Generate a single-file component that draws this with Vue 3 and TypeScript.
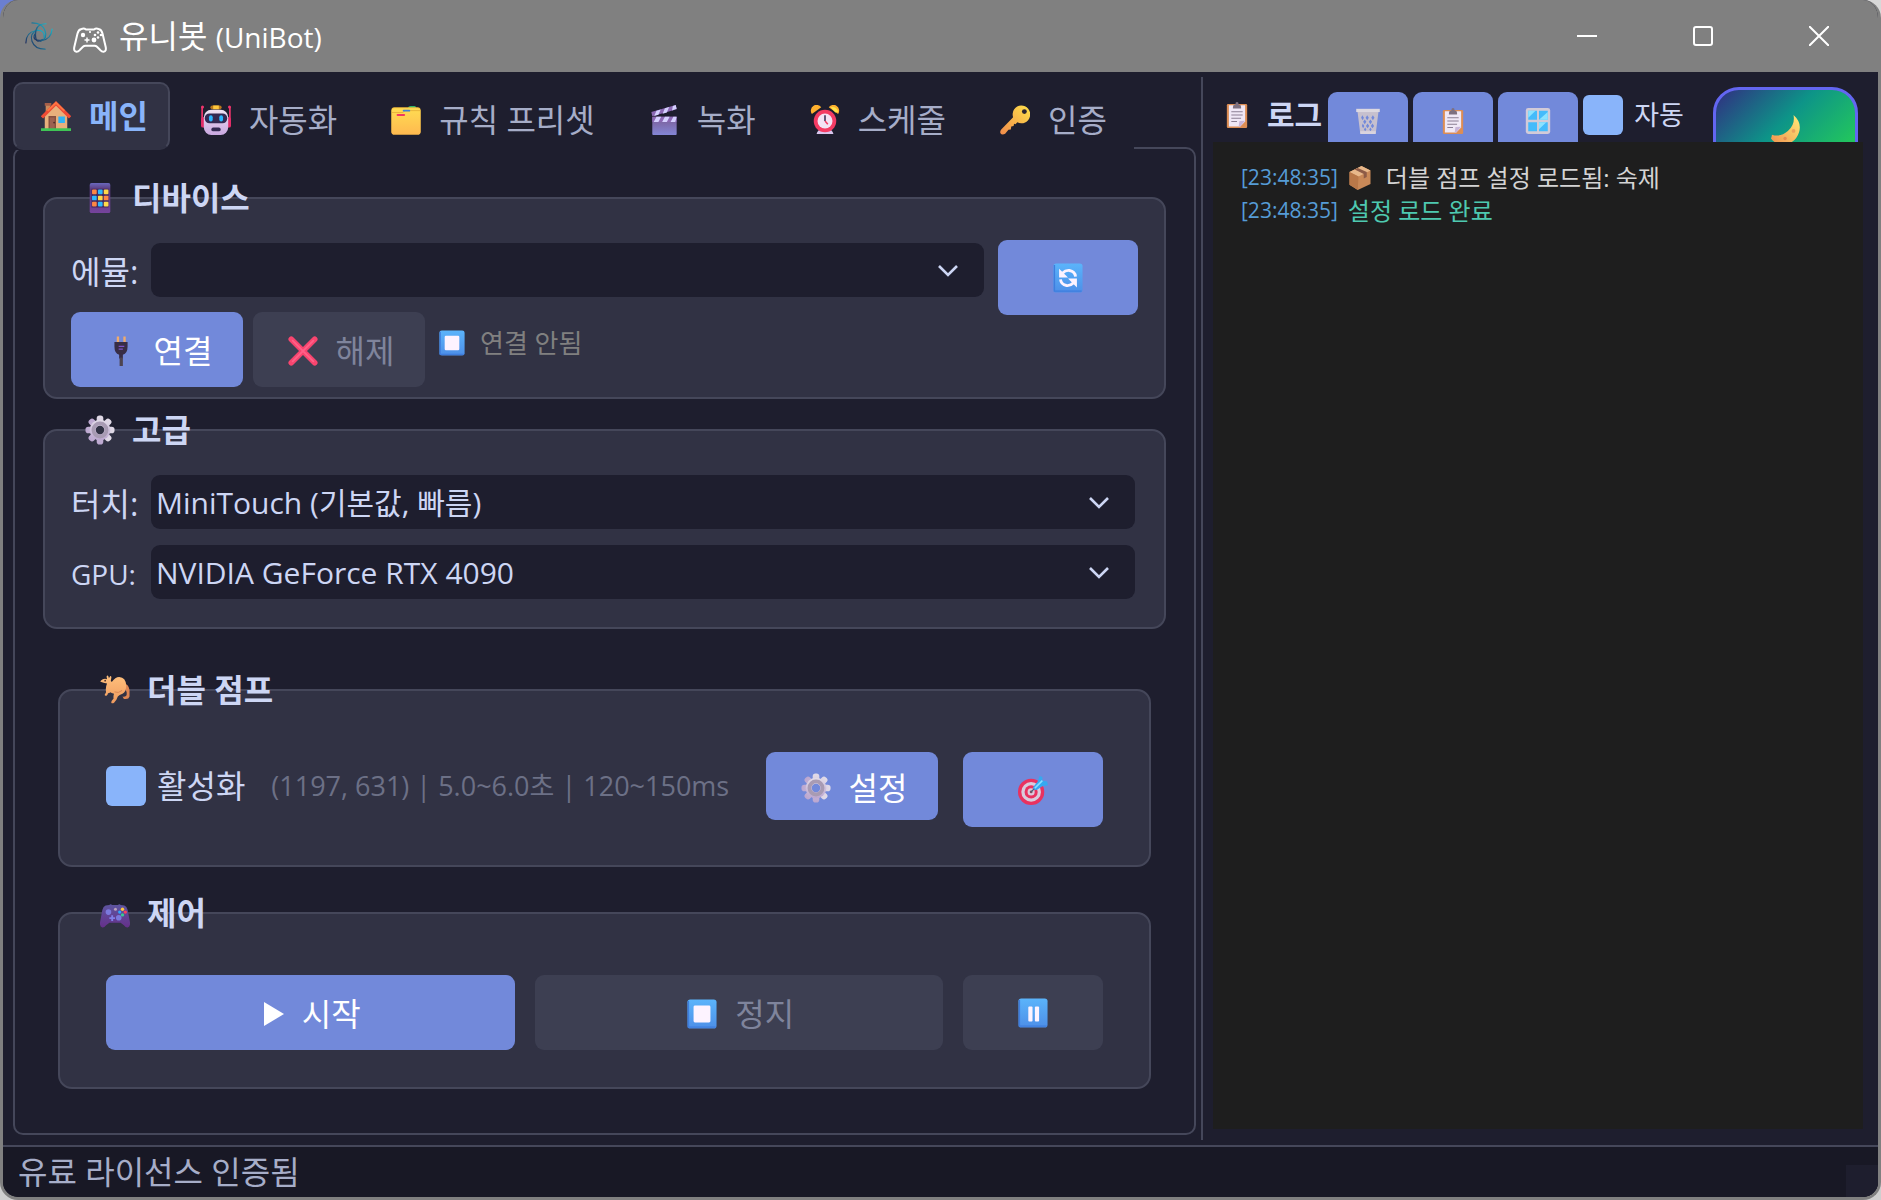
<script setup lang="ts">
import { ref } from 'vue'

interface Tab {
  id: string
  icon: string
  label: string
}

interface LogEntry {
  time: string
  icon?: string
  text: string
  kind: 'info' | 'success'
}

const tabs: Tab[] = [
  { id: 'main', icon: 'house', label: '메인' },
  { id: 'auto', icon: 'robot', label: '자동화' },
  { id: 'presets', icon: 'folder', label: '규칙 프리셋' },
  { id: 'record', icon: 'clapper', label: '녹화' },
  { id: 'schedule', icon: 'alarm', label: '스케줄' },
  { id: 'auth', icon: 'key', label: '인증' },
]

const logs: LogEntry[] = [
  { time: '[23:48:35]', icon: 'package', text: '더블 점프 설정 로드됨: 숙제', kind: 'info' },
  { time: '[23:48:35]', text: '설정 로드 완료', kind: 'success' },
]

const activeTab = ref('main')
const doubleJump = ref(true)
const autoScroll = ref(true)
</script>

<template>
  <svg class="defs" aria-hidden="true">
    <defs>
      <linearGradient id="g-blue" x1="0" y1="0" x2="0" y2="1">
        <stop offset="0" stop-color="#5bb4fb" /><stop offset="1" stop-color="#4d8fe8" />
      </linearGradient>
      <linearGradient id="g-folder" x1="0" y1="0" x2="0" y2="1">
        <stop offset="0" stop-color="#ffdc52" /><stop offset="1" stop-color="#ffb950" />
      </linearGradient>
      <linearGradient id="g-key" x1="1" y1="0" x2="0" y2="1">
        <stop offset="0" stop-color="#ffe14a" /><stop offset="1" stop-color="#f08a4b" />
      </linearGradient>
      <linearGradient id="g-robot" x1="0" y1="0" x2="0" y2="1">
        <stop offset="0" stop-color="#efe3f3" /><stop offset="1" stop-color="#c9a7e0" />
      </linearGradient>
      <linearGradient id="g-clap" x1="0" y1="0" x2="0" y2="1">
        <stop offset="0" stop-color="#7a5c93" /><stop offset="1" stop-color="#8486d6" />
      </linearGradient>
      <linearGradient id="g-phone" x1="0" y1="0" x2="0" y2="1">
        <stop offset="0" stop-color="#6a68bd" /><stop offset="0.2" stop-color="#5c3c7e" /><stop offset="1" stop-color="#75439c" />
      </linearGradient>
      <linearGradient id="g-gear" x1="0" y1="0" x2="0" y2="1">
        <stop offset="0" stop-color="#e2dce8" /><stop offset="1" stop-color="#bba6cf" />
      </linearGradient>
      <linearGradient id="g-pad" x1="0" y1="0" x2="0" y2="1">
        <stop offset="0" stop-color="#5d55a0" /><stop offset="1" stop-color="#65308a" />
      </linearGradient>
      <linearGradient id="g-moon" x1="1" y1="0" x2="0" y2="1">
        <stop offset="0" stop-color="#ffec78" /><stop offset="1" stop-color="#f0904e" />
      </linearGradient>
      <linearGradient id="g-swirl" x1="1" y1="0" x2="0" y2="1">
        <stop offset="0" stop-color="#1fb5c9" /><stop offset="1" stop-color="#22305f" />
      </linearGradient>
      <linearGradient id="g-roo" x1="0" y1="0" x2="0" y2="1">
        <stop offset="0" stop-color="#ffc07c" /><stop offset="1" stop-color="#ee9a5e" />
      </linearGradient>

      <symbol id="i-house" viewBox="0 0 32 32">
        <path d="M5 3h5v14H5z" fill="#c98a5c" />
        <path d="M4 2h7v3H4z" fill="#a65f49" />
        <path d="M4 16 16 4l12 12v14H4z" fill="#e8b07c" />
        <path d="M8 16h8v14H8z" fill="#87503f" />
        <path d="M9.500 17.500h5V30h-5z" fill="#9c6150" />
        <circle cx="14" cy="23" r="1" fill="#4b2b28" />
        <path d="M18.500 16.500h7v7h-7z" fill="#2fb3f5" />
        <path d="m1 17.500 15-15 15 15" fill="none" stroke="#f04b34" stroke-width="3.500" />
        <path d="m7 10.500 9-8.500 9 8.500" fill="none" stroke="#ff7442" stroke-width="2" />
        <path d="M0 29h32v3H0z" fill="#3fc455" />
      </symbol>

      <symbol id="i-robot" viewBox="0 0 32 32">
        <path d="M1.200 2v18M30.800 2v18" stroke="#f0356c" stroke-width="1.800" />
        <circle cx="1.600" cy="2" r="1.600" fill="#f0356c" /><circle cx="30.400" cy="2" r="1.600" fill="#f0356c" />
        <rect x="0" y="13" width="6" height="11" rx="2" fill="#e22d68" /><rect x="26" y="13" width="6" height="11" rx="2" fill="#e22d68" />
        <rect x="10" y="0.500" width="12" height="4" rx="2" fill="#b97619" /><rect x="13" y="0.500" width="6" height="4" fill="#ffc83d" />
        <rect x="3" y="5" width="26" height="27" rx="8" fill="url(#g-robot)" />
        <rect x="4" y="9" width="24" height="10.500" rx="5" fill="#332a52" />
        <rect x="8.500" y="11" width="4" height="6.500" rx="2" fill="#29b6ff" /><rect x="19.500" y="11" width="4" height="6.500" rx="2" fill="#29b6ff" />
        <rect x="11" y="24" width="10" height="4" rx="2" fill="#332a52" />
      </symbol>

      <symbol id="i-folder" viewBox="0 0 32 32">
        <path d="M18 4q0-3 3-3h4q2 0 2 3z" fill="#35b869" />
        <rect x="0.500" y="2.500" width="31" height="29" rx="3" fill="#f4bc3c" />
        <rect x="0.500" y="3.500" width="31" height="28" rx="3" fill="url(#g-folder)" />
        <path d="M1 8h12l2-2h16" fill="none" stroke="#e9b23a" stroke-width="1" />
        <rect x="12.500" y="5" width="8" height="2" rx="1" fill="#3d84d6" />
        <rect x="6" y="9.500" width="9" height="2.200" rx="1" fill="#f03861" />
      </symbol>

      <symbol id="i-clapper" viewBox="0 0 32 32">
        <path d="M2.500 7.500 28.500 0l1 4.500L3.500 12z" fill="#8c69b4" />
        <path d="m8 6 4.500-1.300-2.500 5.800-4.500 1.300zm9-2.600 4.500-1.300L19 8l-4.500 1.300zM25.500 1l3-1 1 4-5 1.800z" fill="#d5d0ff" />
        <rect x="3.500" y="12.500" width="26" height="19.500" rx="1" fill="url(#g-clap)" />
        <path d="M3.500 12.500h26V18h-26z" fill="#8c69b4" />
        <path d="M8 12.500h5L10 18H5zm9 0h5L19 18h-5zm9 0h3.500L28 18h-5z" fill="#d5d0ff" />
      </symbol>

      <symbol id="i-alarm" viewBox="0 0 32 32">
        <path d="M7 31q1-5 5-5h8q4 0 5 5z" fill="#d8c5ec" />
        <path d="M2 9.500A6 6 0 0 1 12 2.500zM30 9.500A6 6 0 0 0 20 2.500z" fill="#ffb02e" />
        <path d="M22 2.500a6 6 0 0 1 8 5l-3 .5z" fill="#ffe24a" />
        <circle cx="16" cy="17" r="12" fill="#f43b63" />
        <circle cx="16" cy="17" r="8" fill="#f3e3f5" />
        <path d="M16 11v6" stroke="#332a52" stroke-width="1.600" /><path d="m16 17 3 3.500" stroke="#f43b63" stroke-width="1.600" />
      </symbol>

      <symbol id="i-key" viewBox="0 0 32 32">
        <path d="M22.500 0.500a9.500 9.500 0 1 1-4 18l-2 2-1.500-.5-.5 2.500-2.500.500-.5 3-2.500.500-3.500 4.200Q2 32.500.5 30q-.8-2 .8-4L14 13A9.500 9.500 0 0 1 22.500.500z" fill="url(#g-key)" />
        <circle cx="26" cy="7" r="2.600" fill="#2b2430" />
      </symbol>

      <symbol id="i-phone" viewBox="0 0 32 32">
        <rect x="5" y="0" width="22" height="32" rx="2" fill="url(#g-phone)" />
        <path d="M7 6h18v20H7z" fill="#43285f" />
        <g fill="#ff8744"><rect x="7.500" y="7" width="5" height="5" rx="1" /><rect x="20" y="13.500" width="5" height="5" rx="1" /><rect x="7.500" y="20" width="5" height="5" rx="1" /></g>
        <g fill="#2eb9ff"><rect x="13.800" y="7" width="5" height="5" rx="1" /><rect x="7.500" y="13.500" width="5" height="5" rx="1" /><rect x="13.800" y="20" width="5" height="5" rx="1" /></g>
        <g fill="#ffd94a"><rect x="20" y="7" width="5" height="5" rx="1" /><rect x="13.800" y="13.500" width="5" height="5" rx="1" /><rect x="20" y="20" width="5" height="5" rx="1" /></g>
      </symbol>

      <symbol id="i-gear" viewBox="0 0 32 32">
        <g fill="url(#g-gear)">
          <rect x="12.500" y="0.500" width="7" height="31" rx="3" />
          <rect x="12.500" y="0.500" width="7" height="31" rx="3" transform="rotate(45 16 16)" />
          <rect x="12.500" y="0.500" width="7" height="31" rx="3" transform="rotate(90 16 16)" />
          <rect x="12.500" y="0.500" width="7" height="31" rx="3" transform="rotate(135 16 16)" />
          <circle cx="16" cy="16" r="11" />
        </g>
        <circle cx="16" cy="16" r="7" fill="none" stroke="#a89bb3" stroke-width="4" />
        <circle cx="16" cy="16" r="4.500" />
      </symbol>

      <symbol id="i-plug" viewBox="0 0 32 32">
        <path d="M11.500 0.500h2.500V7h-2.500zM18.500 0.500H21V7h-2.500z" fill="#f0ab6c" />
        <path d="M9 6.500h14v5q0 7-5 8.500v4h-4v-4q-5-1.500-5-8.500z" fill="#372d46" />
        <path d="M14.500 23h3.500v9h-3.500z" fill="#4d4450" />
        <path d="M13.500 11h6M13.500 14h4.500" stroke="#7c52c4" stroke-width="1.400" />
      </symbol>

      <symbol id="i-cross" viewBox="0 0 32 32">
        <path d="M3.500 3.500 28.500 28.500M28.500 3.500 3.500 28.500" stroke="#f8456f" stroke-width="6" stroke-linecap="round" />
        <path d="m5 5 22 22M27 5 5 27" stroke="#ff6088" stroke-width="2" stroke-linecap="round" />
      </symbol>

      <symbol id="i-refresh" viewBox="0 0 32 32">
        <rect x="0.500" y="0.500" width="31" height="31" rx="3" fill="url(#g-blue)" />
        <path d="M1.500 2v28h29" fill="none" stroke="#3f7ddd" stroke-width="1.500" />
        <path d="M10 11q3.500-3.500 7.500-3 6 1 6.500 6.500M22 21q-3.500 3.500-7.500 3-6-1-6.500-6.500" fill="none" stroke="#fdf3ff" stroke-width="3" />
        <path d="M6.500 6v9.500H16zM25.500 26v-9.500H16z" fill="#fdf3ff" />
      </symbol>

      <symbol id="i-stop" viewBox="0 0 32 32">
        <rect x="0.500" y="0.500" width="31" height="31" rx="3" fill="url(#g-blue)" />
        <path d="M1.500 2v28h29" fill="none" stroke="#3f7ddd" stroke-width="1.500" />
        <rect x="7" y="7" width="18" height="18" rx="1.500" fill="#fdf3ff" />
      </symbol>

      <symbol id="i-pause" viewBox="0 0 32 32">
        <rect x="0.500" y="0.500" width="31" height="31" rx="3" fill="url(#g-blue)" />
        <path d="M1.500 2v28h29" fill="none" stroke="#3f7ddd" stroke-width="1.500" />
        <rect x="11" y="9" width="4.500" height="16" rx="1" fill="#fdf3ff" /><rect x="18" y="9" width="4.500" height="16" rx="1" fill="#fdf3ff" />
      </symbol>

      <symbol id="i-kangaroo" viewBox="0 0 32 32">
        <path d="M24 8q7 2 7.500 8v7q-1 3.500-6 2.500L24 23q4.500.5 4.500-2.500.5-4-3.500-7z" fill="#dd8654" />
        <path d="M7.500 4.500 7 1.500Q8-.2 9 1.500l.5 2L11 1q1.500 0 1 2.500l-.5 3q.5 1 1.500.5Q16 2 20.500 2 27.500 2.500 28 11q0 7-4 9-3.500 1-5 3l-1.500 3.500-2.500 3q-2 1.500-3 0 0-2 2.500-4.500-.5-2.500.5-5-3-.5-4-1.500-1 1-2.500 1 0 1.500-1.500 2.500-2 .5-2-1l1.500-2.500q-1-5 1-9.500Q3.500 8.500.5 7.200 0 6 3 4.500 5.500 3.500 7.500 4.500z" fill="url(#g-roo)" />
        <circle cx="5.500" cy="6" r="0.900" fill="#4b2b28" />
        <path d="M15.500 18q4 2 8-1.500" stroke="#d88452" stroke-width="1" fill="none" />
      </symbol>

      <symbol id="i-target" viewBox="0 0 32 32">
        <circle cx="14" cy="18" r="14" fill="#e9325f" />
        <circle cx="14" cy="18" r="10.500" fill="#d9cbdc" />
        <circle cx="14" cy="18" r="7" fill="#e9325f" />
        <circle cx="14" cy="18" r="3.800" fill="#d9cbdc" />
        <circle cx="14" cy="18" r="1.500" fill="#84505f" />
        <path d="m14 18 6-6" stroke="#49627a" stroke-width="1.400" />
        <path d="m16 13 5-6 2-6 3 1v4l5 1 1 4-6 1-6 4q-4 0-4-3z" fill="#35a9f0" />
        <path d="m18 14 8-8" stroke="#8adfff" stroke-width="1.600" />
      </symbol>

      <symbol id="i-gamepad" viewBox="0 0 32 32">
        <path d="M10 7.500q1-1.500 3 0h6q2-1.500 3 0l4 .6q2.500.8 3.500 4.600L32 26q.5 4.500-2.500 5.500-2 .3-4-2.500L22 26.500H10L6.500 29Q4.500 31.800 2.500 31.500-.5 30.500 0 26l2.500-13.300q1-3.800 3.500-4.600z" fill="url(#g-pad)" />
        <circle cx="9" cy="15" r="3" fill="#7b79dd" /><circle cx="20" cy="21" r="3" fill="#7b79dd" />
        <path d="M13 18.500v6M10 21.500h6" stroke="#7f7fe8" stroke-width="2" />
        <circle cx="16.500" cy="12" r="1.600" fill="#b9a3bd" />
        <circle cx="24" cy="12" r="1.800" fill="#ffc83d" /><circle cx="27" cy="15" r="1.800" fill="#f8415f" />
        <circle cx="21" cy="15" r="1.700" fill="#2fa8ff" /><circle cx="24" cy="18" r="1.800" fill="#38c995" />
      </symbol>

      <symbol id="i-gamepad-line" viewBox="0 0 34 26">
        <path d="M8.500 2q2.500-1 4.500.5h8Q23 1 25.500 2q3 .5 4 4.500L32.700 20q.8 4.500-2 4.800-1.700.2-3.700-2L24 19.700q-1-1-2.500-1h-9q-1.500 0-2.500 1l-3 3.100q-2 2.200-3.700 2-2.800-.3-2-4.800L4.500 6.500q1-4 4-4.500z" fill="none" stroke="#fff" stroke-width="2" />
        <path d="M14 10.500v5M11.500 13h5" stroke="#fff" stroke-width="1.500" />
        <circle cx="10" cy="8" r="2.200" fill="#fff" /><circle cx="21" cy="13" r="2.400" fill="#fff" />
        <g fill="#fff"><circle cx="17" cy="5" r="1.100" /><circle cx="25" cy="5.500" r="1.300" /><circle cx="25" cy="10.500" r="1.300" /><circle cx="22" cy="8" r="1.300" /><circle cx="28" cy="8" r="1.300" /></g>
      </symbol>

      <symbol id="i-swirl" viewBox="0 0 32 32">
        <g fill="none" stroke="url(#g-swirl)" stroke-width="1.400" stroke-linecap="round">
          <path d="M31 8Q30 20 19 21T11 14" /><path d="M8 1q12 0 15 9t-5 12" />
          <path d="M1 24Q1 12 12 10t10 8" /><path d="M23 31Q11 31 8 22t6-13" />
          <path d="M24 2Q12 2 12 14t8 6" />
        </g>
      </symbol>

      <symbol id="i-clipboard" viewBox="0 0 32 32">
        <rect x="3.500" y="2.500" width="25" height="29.500" rx="1.500" fill="#dc8d54" />
        <path d="M6 4h20v20l-6 6H6z" fill="#f0e8f6" />
        <path d="m26 23-7 .5L18 30h2z" fill="#c9b5d8" />
        <path d="M11 6q0-3 3-3 0-3 2-3t2 3q3 0 3 3v2H11z" fill="#7d7080" />
        <path d="M9 12h14M9 16h14M9 20h12M9 24h7" stroke="#8b7f94" stroke-width="1.500" />
      </symbol>

      <symbol id="i-trash" viewBox="0 0 32 32">
        <path d="M3 4h26l-3.500 27.500h-19z" fill="#c6c0ce" />
        <g fill="#7289da"><path d="m9 9 2 3-1.500 3L7.500 12zM15 9l2 3-2 3-2-3zM22 9l2 3-2 3-2-3zM12 14l2 3-2 3-2-3zM19 14l2 3-2 3-2-3zM9.500 19l2 3-1.500 3-1.500-3zM15.500 19l2 3-2 3-2-3zM21.500 19l2 3-2 3-2-3zM12.500 24l1.500 2.500-1.500 2L11 26.500zM19 24l1.500 2.500-1.500 2-1.500-2z" /></g>
        <path d="M1.500 1h29v4h-29z" fill="#dcd8e0" /><path d="M6.500 28.500h19v3.500h-19z" fill="#d9d4de" />
      </symbol>

      <symbol id="i-window" viewBox="0 0 32 32">
        <rect x="1" y="0" width="30" height="32" rx="3" fill="#d2cbd8" />
        <path d="M4 3.500h10.800v11H4zM17.200 3.500H28v11H17.200zM4 17.500h10.800v11H4zM17.200 17.500H28v11H17.200z" fill="#44bbfb" />
        <path d="m4 12 9-8.500H4zM17.200 14.500 28 5v9.500zM17.200 26l9-8.500h-9z" fill="#8be2ff" />
      </symbol>

      <symbol id="i-moon" viewBox="0 0 32 32">
        <path d="M24 0q9 8 6 18T16 32Q5 32 0 25q1-3 1-4 9 3 17-4T24 0z" fill="url(#g-moon)" />
        <circle cx="24" cy="17" r="2" fill="#eda25b" /><circle cx="15" cy="25" r="1.800" fill="#e88c50" />
      </symbol>

      <symbol id="i-package" viewBox="0 0 32 32">
        <path d="m2 8 16-8 12 6v18L13 32 2 25z" fill="#c98958" />
        <path d="m2 8 16-8 12 6-16 8z" fill="#e8b88a" />
        <path d="m2 8 12 6-1 18L2 25z" fill="#b97849" />
        <path d="m9 4.500 12 6v6l4-2V8L13 2.500z" fill="#8d5b46" />
      </symbol>

      <symbol id="i-chevron" viewBox="0 0 22 14">
        <path d="m2 2 9 9 9-9" fill="none" stroke="#cdd6f4" stroke-width="2.600" />
      </symbol>
      <symbol id="i-play" viewBox="0 0 20 24"><path d="M0 0v24l20-12z" fill="#fff" /></symbol>
    </defs>
  </svg>

  <div class="window">
    <header class="titlebar">
      <svg class="app-logo"><use href="#i-swirl" /></svg>
      <svg class="app-pad"><use href="#i-gamepad-line" /></svg>
      <h1>유니봇 <span>(UniBot)</span></h1>
      <div class="win-controls">
        <button type="button" aria-label="최소화"><svg viewBox="0 0 20 20"><path d="M0 10h20" /></svg></button>
        <button type="button" aria-label="최대화"><svg viewBox="0 0 20 20"><rect x="1" y="1" width="18" height="18" rx="2" /></svg></button>
        <button type="button" aria-label="닫기"><svg viewBox="0 0 20 20"><path d="m0 0 20 20M20 0 0 20" /></svg></button>
      </div>
    </header>

    <main class="body">
      <div class="left">
        <nav class="tabs" role="tablist">
          <button
            v-for="tab in tabs"
            :key="tab.id"
            type="button"
            role="tab"
            class="tab"
            :class="{ active: tab.id === activeTab }"
            :aria-selected="tab.id === activeTab"
            @click="activeTab = tab.id"
          >
            <svg class="ico"><use :href="'#i-' + tab.icon" /></svg>{{ tab.label }}
          </button>
        </nav>

        <div class="pane">
          <section class="group device">
            <h2><svg class="ico"><use href="#i-phone" /></svg>디바이스</h2>
            <div class="row emu-row">
              <label for="emu">에뮬:</label>
              <div class="combo">
                <select id="emu"><option value=""></option></select>
                <svg class="chevron"><use href="#i-chevron" /></svg>
              </div>
              <button type="button" class="btn square" aria-label="새로고침"><svg class="ico"><use href="#i-refresh" /></svg></button>
            </div>
            <div class="row connect-row">
              <button type="button" class="btn"><svg class="ico"><use href="#i-plug" /></svg>연결</button>
              <button type="button" class="btn" disabled><svg class="ico"><use href="#i-cross" /></svg>해제</button>
              <p class="status"><svg class="ico small"><use href="#i-stop" /></svg>연결 안됨</p>
            </div>
          </section>

          <section class="group advanced">
            <h2><svg class="ico dark-hole"><use href="#i-gear" /></svg>고급</h2>
            <div class="row">
              <label for="touch">터치:</label>
              <div class="combo">
                <select id="touch"><option>MiniTouch (기본값, 빠름)</option></select>
                <svg class="chevron"><use href="#i-chevron" /></svg>
              </div>
            </div>
            <div class="row">
              <label for="gpu" class="latin">GPU:</label>
              <div class="combo">
                <select id="gpu"><option>NVIDIA GeForce RTX 4090</option></select>
                <svg class="chevron"><use href="#i-chevron" /></svg>
              </div>
            </div>
          </section>

          <section class="group inset jump">
            <h2><svg class="ico"><use href="#i-kangaroo" /></svg>더블 점프</h2>
            <div class="row jump-row">
              <label class="check"><input v-model="doubleJump" type="checkbox" />활성화</label>
              <span class="info">(1197, 631) | 5.0~6.0초 | 120~150ms</span>
              <button type="button" class="btn settings"><svg class="ico blue-hole"><use href="#i-gear" /></svg>설정</button>
              <button type="button" class="btn square" aria-label="위치 지정"><svg class="ico"><use href="#i-target" /></svg></button>
            </div>
          </section>

          <section class="group inset control">
            <h2><svg class="ico"><use href="#i-gamepad" /></svg>제어</h2>
            <div class="control-row">
              <button type="button" class="btn"><svg class="play"><use href="#i-play" /></svg>시작</button>
              <button type="button" class="btn" disabled><svg class="ico"><use href="#i-stop" /></svg>정지</button>
              <button type="button" class="btn square" disabled aria-label="일시정지"><svg class="ico"><use href="#i-pause" /></svg></button>
            </div>
          </section>
        </div>
      </div>

      <div class="splitter"></div>

      <aside class="right">
        <div class="log-head">
          <h2><svg class="ico small"><use href="#i-clipboard" /></svg>로그</h2>
          <button type="button" class="btn mini" aria-label="지우기"><svg class="ico small"><use href="#i-trash" /></svg></button>
          <button type="button" class="btn mini" aria-label="복사"><svg class="ico small"><use href="#i-clipboard" /></svg></button>
          <button type="button" class="btn mini" aria-label="창"><svg class="ico small"><use href="#i-window" /></svg></button>
          <label class="check auto"><input v-model="autoScroll" type="checkbox" />자동</label>
          <button type="button" class="theme" aria-label="테마"><svg class="ico"><use href="#i-moon" /></svg></button>
        </div>
        <div class="log">
          <p v-for="(entry, i) in logs" :key="i" :class="entry.kind">
            <time>{{ entry.time }}</time>
            <svg v-if="entry.icon" class="ico log-ico"><use :href="'#i-' + entry.icon" /></svg>
            <span>{{ entry.text }}</span>
          </p>
        </div>
      </aside>
    </main>

    <footer class="statusbar">
      <span>유료 라이선스 인증됨</span>
      <i class="grip"></i>
    </footer>
  </div>
</template>

<style>
body {
  margin: 0;
  background: linear-gradient(90deg, #6b7fd0 50%, #d8d8d8 50%) top / 100% 50% no-repeat, #cfcfcf;
}
</style>

<style scoped>
* {
  box-sizing: border-box;
}

.defs {
  position: absolute;
  width: 0;
  height: 0;
}

.window {
  display: flex;
  flex-direction: column;
  min-height: 100vh;
  overflow: hidden;
  border: 3px solid #808080;
  border-top: 0;
  border-radius: 18px;
  background: #1e1e2e;
  color: #cdd6f4;
  font-family: "Open Sans", "Noto Sans CJK KR", sans-serif;
  font-size: 32px;
  line-height: 40px;
}

button,
select {
  font: inherit;
  color: inherit;
}

h1,
h2,
p {
  margin: 0;
}

.ico {
  flex: none;
  width: 30px;
  height: 30px;
}

.ico.small {
  width: 26px;
  height: 26px;
}

.dark-hole {
  fill: #313244;
}

.blue-hole {
  fill: #7289da;
}

/* title bar */
.titlebar {
  display: flex;
  align-items: center;
  height: 72px;
  padding-left: 22px;
  background: #808080;
  color: #fff;
}

.app-logo {
  width: 28px;
  height: 28px;
}

.app-pad {
  width: 34px;
  height: 26px;
  margin: 8px 12px 0 20px;
}

.titlebar h1 {
  font-size: 32px;
  font-weight: 400;
}

.titlebar h1 span {
  font-size: 28px;
}

.win-controls {
  display: flex;
  margin-left: auto;
  padding-right: 1px;
}

.win-controls button {
  display: flex;
  align-items: center;
  justify-content: center;
  width: 116px;
  height: 72px;
  padding: 0;
  border: 0;
  background: none;
}

.win-controls svg {
  width: 20px;
  height: 20px;
  fill: none;
  stroke: #fff;
  stroke-width: 2;
}

/* layout */
.body {
  display: grid;
  flex: 1;
  grid-template-columns: minmax(0, 1198fr) 2px minmax(0, 675fr);
}

.left {
  display: flex;
  flex-direction: column;
  padding: 10px 5px 10px 10px;
}

.splitter {
  margin: 5px 0;
  background: #45475a;
}

/* tabs */
.tabs {
  position: relative;
  z-index: 1;
  display: flex;
  align-self: flex-start;
  height: 68px;
  margin-bottom: -3px;
  background: #1e1e2e;
}

.tab {
  display: flex;
  align-items: center;
  gap: 18px;
  padding: 8px 27px 0;
  border: 0;
  background: none;
  color: #a6adc8;
  white-space: nowrap;
}

.tab.active {
  margin-right: 4px;
  padding: 0 20px 0 26px;
  border: 2px solid #45475a;
  border-bottom-color: #313244;
  border-radius: 10px;
  background: #313244;
  color: #89b4fa;
  font-weight: 700;
}

.pane {
  flex: 1;
  padding: 48px 28px 41px;
  border: 2px solid #45475a;
  border-radius: 10px;
}

/* groups */
.group {
  position: relative;
  padding: 41px 26px 10px;
  border: 2px solid #45475a;
  border-radius: 14px;
  background: #313244;
}

.group h2 {
  position: absolute;
  top: -21px;
  left: 40px;
  display: flex;
  align-items: center;
  gap: 17px;
  font-size: 32px;
  font-weight: 700;
}

.group.advanced {
  margin-top: 30px;
  padding: 44px 29px 28px 26px;
}

.group.inset {
  margin: 45px 15px 0;
  padding: 61px 46px 37px;
}

.group.jump {
  margin-top: 60px;
  padding-bottom: 45px;
}

.row {
  display: flex;
  align-items: center;
}

.row > label:not(.check) {
  flex: none;
  width: 80px;
  padding-top: 4px;
}

.row > label.latin {
  font-size: 28px;
}

.emu-row {
  height: 60px;
  margin-bottom: 12px;
}

.emu-row .square {
  align-self: flex-start;
  margin-left: 14px;
}

.advanced .row + .row {
  margin-top: 16px;
}

.combo {
  position: relative;
  flex: 1;
}

.combo select {
  display: block;
  width: 100%;
  height: 54px;
  padding: 2px 60px 0 5px;
  border: 0;
  border-radius: 9px;
  appearance: none;
  background: #1e1e2e;
  color: #cdd6f4;
  font-size: 30px;
}

.chevron {
  position: absolute;
  top: 21px;
  right: 25px;
  width: 22px;
  height: 14px;
  pointer-events: none;
}

/* buttons */
.btn {
  display: flex;
  flex: none;
  align-items: center;
  justify-content: center;
  gap: 18px;
  width: 172px;
  height: 75px;
  padding: 3px 0 0 4px;
  border: 0;
  border-radius: 9px;
  background: #7289da;
  color: #fff;
}

.btn:disabled {
  background: #3d3f52;
  color: #7f849c;
}

.btn.square,
.btn.mini {
  padding: 0;
}

.btn.square {
  width: 140px;
}

.connect-row {
  gap: 10px;
}

.status {
  display: flex;
  align-items: center;
  gap: 15px;
  height: 75px;
  padding: 0 0 13px 4px;
  color: #808080;
  font-size: 26px;
}

.check {
  display: flex;
  align-items: center;
  gap: 11px;
}

.check input {
  width: 40px;
  height: 40px;
  margin: 0;
  border-radius: 6px;
  appearance: none;
  background: #45475a;
}

.check input:checked {
  background: #89b4fa;
}

.jump-row {
  height: 68px;
}

.jump-row .square {
  align-self: flex-start;
  margin-left: 25px;
}

.info {
  margin-left: 26px;
  color: #6c7086;
  font-size: 27px;
  white-space: nowrap;
}

.settings {
  height: 68px;
  margin-left: auto;
}

.control-row {
  display: grid;
  grid-template-columns: 1fr 1fr 140px;
  gap: 20px;
}

.control-row .btn {
  width: auto;
}

.play {
  width: 20px;
  height: 24px;
}

/* log panel */
.right {
  display: flex;
  flex-direction: column;
  padding: 0 15px 16px 10px;
}

.log-head {
  display: flex;
  align-items: flex-start;
  gap: 5px;
  height: 70px;
  padding: 20px 5px 0 11px;
  overflow: hidden;
}

.log-head h2 {
  display: flex;
  align-items: center;
  gap: 17px;
  height: 46px;
  padding-right: 1px;
  font-size: 30px;
  font-weight: 700;
}

.btn.mini {
  width: 80px;
  height: 58px;
}

.check.auto {
  height: 46px;
  font-size: 27px;
}

.theme {
  display: flex;
  align-items: center;
  justify-content: center;
  width: 145px;
  height: 86px;
  margin: -5px 0 0 auto;
  padding: 0;
  border: 3px solid #6366f1;
  border-radius: 26px;
  background: linear-gradient(135deg, #312e81 0%, #0d9488 45%, #22c55e 85%);
}

.log {
  flex: 1;
  padding: 19px 28px;
  background: #1e1e1e;
  font-size: 24px;
  line-height: 33px;
}

.log p {
  display: flex;
  align-items: center;
  height: 33px;
}

.log time {
  margin-right: 10px;
  color: #569cd6;
  font-size: 21px;
}

.log-ico {
  width: 24px;
  height: 24px;
  margin-right: 14px;
}

.log .info {
  margin: 0;
  color: #d4d4d4;
  font-size: 24px;
}

.log .success {
  color: #4ec9b0;
}

/* status bar */
.statusbar {
  display: flex;
  align-items: center;
  justify-content: space-between;
  height: 52px;
  padding-left: 15px;
  border-top: 2px solid #45475a;
  background: #181825;
  color: #a6adc8;
}

.grip {
  align-self: flex-end;
  width: 32px;
  height: 32px;
  background: #1e1e2e;
}
</style>
